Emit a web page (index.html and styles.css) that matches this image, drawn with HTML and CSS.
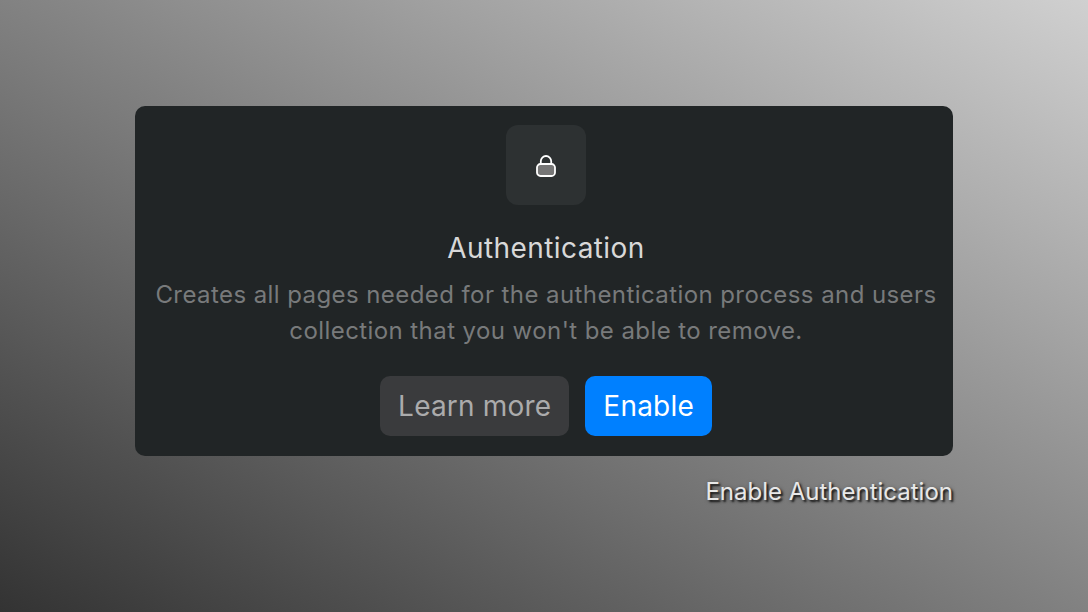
FILE: index.html
```html
<!DOCTYPE html>
<html lang="en">
<head>
<meta charset="utf-8">
<title>Enable Authentication</title>
<link rel="stylesheet" href="styles.css">
</head>
<body>
<main class="stack">
  <section class="card">
    <div class="icon-tile">
      <svg class="lock" width="22" height="24" viewBox="0 0 22 24" fill="none" aria-hidden="true">
        <path class="lock-shackle" d="M5.8 11V8.2a5.200 5.200 0 0 1 10.400 0V11"/>
        <rect class="lock-body" x="2" y="11" width="18" height="12" rx="3.500"/>
      </svg>
    </div>
    <h1 class="title">Authentication</h1>
    <p class="desc">Creates all pages needed for the authentication process and users collection that you won't be able to remove.</p>
    <div class="actions">
      <button class="btn btn-muted">Learn more</button>
      <button class="btn btn-primary">Enable</button>
    </div>
  </section>
  <div class="caption">Enable Authentication</div>
</main>
</body>
</html>
```
FILE: styles.css
```css
* { box-sizing: border-box; }
html, body { margin: 0; height: 100%; }
body {
  width: 1088px;
  height: 612px;
  overflow: hidden;
  background: linear-gradient(to top right, #333 0%, #d0d0d0 100%);
  font-family: Inter, "Liberation Sans", sans-serif;
  padding: 106px 135px 0;
}
.stack { display: flex; flex-direction: column; align-items: flex-end; width: 818px; }
.card {
  width: 818px;
  height: 350px;
  background: #212526;
  border-radius: 10px;
  display: flex;
  flex-direction: column;
  align-items: center;
  padding: 19px 0 0 4px;
}
.icon-tile {
  width: 80px;
  height: 80px;
  border-radius: 12px;
  background: #2d3132;
  display: flex;
  align-items: center;
  justify-content: center;
}
.lock { display: block; width: 22px; height: 24px; }
.lock-shackle { stroke: #fff; stroke-width: 1.800; }
.lock-body { fill: #767676; stroke: #fff; stroke-width: 1.800; }
.title {
  margin: 27px 0 0;
  font-size: 28px;
  line-height: 32px;
  font-weight: 400;
  color: #d8d8d8;
  letter-spacing: 0.4px;
}
.desc {
  margin: 13px 0 0;
  width: 800px;
  font-size: 24px;
  line-height: 36px;
  color: #787a7b;
  text-align: center;
  letter-spacing: 0.42px;
}
.actions { display: flex; gap: 16px; margin-top: 27px; }
.btn {
  height: 60px;
  padding: 0 18px;
  border: 0;
  border-radius: 10px;
  font-family: inherit;
  font-size: 28px;
  font-weight: 400;
  letter-spacing: 0.2px;
}
.btn-muted { background: #3a3b3d; color: #ababac; }
.btn-primary { background: #0080ff; color: #fff; }
.caption {
  margin-top: 22px;
  font-size: 24px;
  line-height: 28px;
  color: #e8e8e8;
  text-shadow: 2px 2px 2px #1c1c1c, 1px 1px 4px rgba(0, 0, 0, 0.4);
}
```
